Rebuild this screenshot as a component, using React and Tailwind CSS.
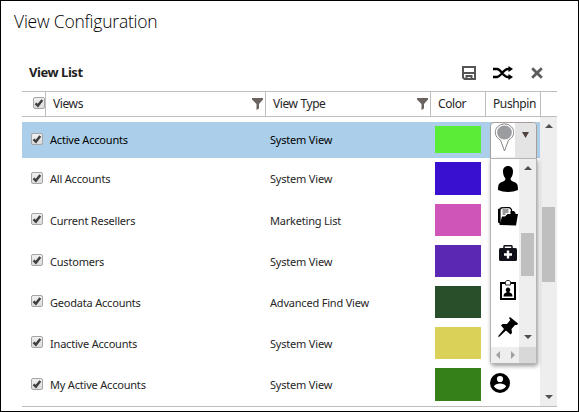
import React from "react";

const rows = [
  { name: "Active Accounts", type: "System View", row: "h-[36px] bg-[#abcfea] text-black", check: "pb-[2px]", label: "", swatch: "h-[27px] bg-[#5aec37]" },
  { name: "All Accounts", type: "System View", row: "h-[42px]", check: "pb-[2px]", label: "", swatch: "h-[33px] bg-[#3a10d0]" },
  { name: "Current Resellers", type: "Marketing List", row: "h-[41px]", check: "pb-[3px]", label: "pt-[2px]", swatch: "h-[32px] bg-[#cf55b8]" },
  { name: "Customers", type: "System View", row: "h-[41px]", check: "pb-[3px]", label: "pt-[2px]", swatch: "h-[32px] bg-[#5b28b4]" },
  { name: "Geodata Accounts", type: "Advanced Find View", row: "h-[41px]", check: "pb-[3px]", label: "pt-[2px]", swatch: "h-[32px] bg-[#284f2a]" },
  { name: "Inactive Accounts", type: "System View", row: "h-[41px]", check: "pb-[3px]", label: "pt-[2px]", swatch: "h-[32px] bg-[#dad158]" },
  { name: "My Active Accounts", type: "System View", row: "h-[41px]", check: "pb-[1px]", label: "pt-[2px]", swatch: "h-[33px] bg-[#358018]" },
];

function Check() {
  return (
    <span className="block h-[12px] w-[12px] shrink-0 rounded-[2px] border border-[#a5a5a5] bg-gradient-to-b from-[#f0f0f0] to-[#dcdcdc]">
      <svg viewBox="0 0 10 10" className="block h-[10px] w-[10px]">
        <path d="M1.500 5.300 3.900 7.600 8.300 2" fill="none" stroke="#404040" strokeWidth="2.400" />
      </svg>
    </span>
  );
}

function Funnel() {
  return (
    <svg viewBox="0 0 11 12" className="h-[12px] w-[11px]">
      <path d="M0 0h11v1.5L7 6v4.5L4.5 12V6L0 1.5z" fill="#6b6360" />
    </svg>
  );
}

function Triangle({ up }) {
  return (
    <svg viewBox="0 0 8 4" className="h-[4px] w-[8px]">
      <path d={up ? "M0 4 4 0l4 4z" : "M0 0h8L4 4z"} fill="#505050" />
    </svg>
  );
}

function PersonIcon() {
  return (
    <svg viewBox="0 0 20 26" className="h-[26px] w-[20px]">
      <path d="M10 0c3.300 0 5 2.300 5 5.500 0 3-1 5.300-2.300 6.800v1.700c1 1.400 3 1.700 5 2.700 1.800.9 2.300 3 2.300 7.300-3 1.300-6 2-10 2s-7-.7-10-2c0-4.300.5-6.400 2.300-7.300 2-1 4-1.300 5-2.700v-1.700C6 10.800 5 8.500 5 5.500 5 2.300 6.700 0 10 0z" fill="#000" />
    </svg>
  );
}

function FolderIcon() {
  return (
    <svg viewBox="0 0 20 19" className="h-[19px] w-[20px]">
      <path d="M3 17 .6 15V2.500L3 1.500V.8L11.500.5l2 2V7" fill="#fff" stroke="#000" strokeWidth="1.200" />
      <path d="M1.700 2V16" stroke="#000" strokeWidth="1.800" />
      <path d="M4.500 3h6M4.500 5h6M4.500 7h3" stroke="#222" strokeWidth=".9" />
      <path d="M12.500 4h3.500L17.500 6v1H20l-2 11.500L1.500 18 4 9.500h3L9.500 7h3z" fill="#000" />
    </svg>
  );
}

function KitIcon() {
  return (
    <svg viewBox="0 0 18 16" className="h-[16px] w-[18px]">
      <path d="M5 4V1.500Q5 .8 6 .8h6q1 0 1 .7V4" fill="none" stroke="#101018" strokeWidth="1.500" />
      <rect y="3" width="18" height="13" rx="1.500" fill="#101018" />
      <path d="M9 5.500v8M5 9.500h8" stroke="#fff" strokeWidth="2.400" />
    </svg>
  );
}

function BadgeIcon() {
  return (
    <svg viewBox="0 0 16 20" className="h-[20px] w-[16px]">
      <path d="M5 3H1v16h14V3h-4" fill="none" stroke="#000" strokeWidth="2" />
      <path d="M5.500 5V1.500L7 .5h2l1.500 1V5z" fill="#fff" stroke="#333" strokeWidth="1" />
      <path d="M8 7.500a2.300 2.300 0 0 1 1.500 4v1c2 .4 3 1.500 3 4h-9c0-2.500 1-3.600 3-4v-1A2.300 2.300 0 0 1 8 7.500z" fill="#000" />
    </svg>
  );
}

function TackIcon() {
  return (
    <svg viewBox="0 0 20 20" className="h-[20px] w-[20px]">
      <path d="M12 0 20 6.500 19 8h-2l-3.500 4 .5 4-1.500 1.500-4.500-4L1 20l-1-.7 6-7.300-3-3.500L4.500 7H9l3.300-4L11 1z" fill="#000" />
    </svg>
  );
}

function AccountIcon() {
  return (
    <svg viewBox="0 0 20 20" className="h-[20px] w-[20px]">
      <circle cx="10" cy="10" r="10" fill="#000" />
      <circle cx="10" cy="6" r="3.100" fill="#fff" />
      <path d="M4 13.500c0-2 4-3.100 6-3.100s6 1.100 6 3.100a7.200 7.200 0 0 1-12 0z" fill="#fff" />
    </svg>
  );
}

function PushpinPicker() {
  return (
    <div className="absolute left-[468px] top-[5px] w-[47px]">
      <div className="flex h-[37px] rounded-t-[4px] border border-[#a89c98] bg-white">
        <div className="w-[24px] shrink-0 pl-[3px]">
          <svg viewBox="0 0 20 29" className="h-[29px] w-[20px]">
            <path d="M6.500 17 10.500 28l4-11a9.200 8.500 0 1 0-8 0z" fill="#fff" stroke="#858585" strokeWidth="1" />
            <ellipse cx="10.500" cy="9.500" rx="7.400" ry="7" fill="#9b9ca0" />
          </svg>
        </div>
        <div className="flex flex-1 justify-center rounded-tr-[3px] bg-[#e5e4e4] pr-px pt-[9px]">
          <svg viewBox="0 0 7 6" className="h-[6px] w-[7px]">
            <path d="M0 0h7L3.500 6z" fill="#51433f" />
          </svg>
        </div>
      </div>
      <div className="-mt-px h-[206px] rounded-b-[3px] border border-[#b4b4b4] bg-white shadow-[1px_2px_4px_rgba(0,0,0,0.4)]">
        <div className="flex h-[188px]">
          <div className="flex w-[28px] flex-col items-center pl-[6px] pt-[7px]">
            <PersonIcon />
            <div className="mt-[15px]"><FolderIcon /></div>
            <div className="mt-[19px]"><KitIcon /></div>
            <div className="mt-[19px]"><BadgeIcon /></div>
            <div className="mt-[17px]"><TackIcon /></div>
          </div>
          <div className="flex w-[17px] flex-col items-center bg-[#eeeeee] pt-[7px]">
            <Triangle up />
            <div className="mt-[63px] h-[43px] w-[13px] bg-[#bfbfbf]" />
            <div className="mt-[59px]"><Triangle /></div>
          </div>
        </div>
        <div className="flex h-[16px]">
          <div className="flex w-[28px] items-center justify-between bg-[#eeeeee] pl-[5px] pr-[4px]">
            <svg viewBox="0 0 4 8" className="h-[8px] w-[4px]"><path d="M4 0v8L0 4z" fill="#a0a0a0" /></svg>
            <svg viewBox="0 0 4 8" className="h-[8px] w-[4px]"><path d="M0 0v8l4-4z" fill="#a0a0a0" /></svg>
          </div>
          <div className="w-[17px] bg-[#d8d8d8]" />
        </div>
      </div>
    </div>
  );
}

export default function App() {
  return (
    <div className="h-[412px] w-[579px] overflow-hidden border border-black bg-white font-['Noto_Sans',sans-serif] text-[11px] tracking-[-0.2px] text-[#262626]">
      <h1 className="ml-[13px] mt-[8px] h-[24px] whitespace-nowrap font-['Open_Sans',sans-serif] text-[17.500px] font-light leading-[24px] tracking-[-0.22px] text-black">View Configuration</h1>
      <div className="ml-[21px] mt-[22px] w-[535px]">
        <div className="flex h-[36px] items-center pb-px">
          <h2 className="ml-[7px] flex-1 whitespace-nowrap text-[13px] font-bold tracking-[-0.45px] text-[#1e1e1e]">View List</h2>
          <svg viewBox="0 0 14 14" className="h-[14px] w-[14px]">
            <path d="M1 1h12v12H2.500L1 11.500zM1 7h12M4.500 13v-3h5v3" fill="none" stroke="#555" strokeWidth="2" />
          </svg>
          <svg viewBox="0 0 20 14" className="ml-[17px] h-[14px] w-[20px]">
            <path d="M0 3h4c4 0 6 8 11 8h2M0 11h4c4 0 6-8 11-8h2" fill="none" stroke="#000" strokeWidth="2.300" />
            <path d="m15.500 0 4.500 3-4.500 3zM15.500 8l4.500 3-4.500 3z" fill="#000" />
          </svg>
          <svg viewBox="0 0 12 12" className="ml-[18px] mr-[14px] h-[12px] w-[12px]">
            <path d="m1.200 1.200 9.600 9.600m0-9.600-9.600 9.600" stroke="#5c5c5c" strokeWidth="2.800" />
          </svg>
        </div>
        <div className="flex h-[26px] border-y border-[#bdbdbd] text-[12px] tracking-[-0.4px]">
          <div className="flex w-[24px] justify-end border-r border-[#bdbdbd] pt-[5px]"><Check /></div>
          <div className="flex w-[220px] items-center justify-between border-r border-[#bdbdbd] pl-[7px] pr-[2px]">
            <span>Views</span><Funnel />
          </div>
          <div className="flex w-[165px] items-center justify-between border-r border-[#bdbdbd] pl-[7px] pr-[2px]">
            <span>View Type</span><Funnel />
          </div>
          <div className="flex w-[55px] items-center border-r border-[#bdbdbd] pl-[7px]">Color</div>
          <div className="flex w-[55px] items-center border-r border-[#bdbdbd] pl-[7px]">Pushpin</div>
        </div>
        <div className="relative flex h-[290px] border-b border-[#bdbdbd]">
          <div className="w-[518px] pt-[5px]">
            {rows.map((r, i) => (
              <div key={r.name} className={`flex ${r.row}`}>
                <div className={`flex w-[28px] items-center pl-[9px] ${r.check}`}><Check /></div>
                <div className={`flex w-[220px] items-center whitespace-nowrap ${r.label}`}>{r.name}</div>
                <div className={`flex w-[165px] items-center whitespace-nowrap ${r.label}`}>{r.type}</div>
                <div className={`mt-[4px] w-[46px] ${r.swatch}`} />
                {i === 6 && <div className="ml-[9px] mt-[9px]"><AccountIcon /></div>}
              </div>
            ))}
          </div>
          <div className="flex w-[17px] flex-col items-center bg-[#eeeeee] pt-[7px]">
            <Triangle up />
            <div className="mt-[79px] h-[75px] w-[13px] bg-[#bfbfbf]" />
            <div className="mt-[113px]"><Triangle /></div>
          </div>
          <PushpinPicker />
        </div>
      </div>
    </div>
  );
}
